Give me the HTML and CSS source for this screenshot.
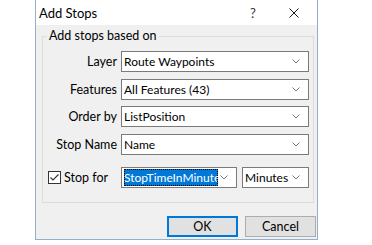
FILE: index.html
```html
<!DOCTYPE html>
<html>
<head>
<meta charset="utf-8">
<link rel="stylesheet" href="styles.css">
</head>
<body>
<div class="dialog">
  <div class="titlebar">
    <span class="title">Add Stops</span>
    <span class="help">?</span>
    <span class="close"><svg width="10" height="10" viewBox="0 0 10 10"><path d="M0.5 0.5 L9.5 9.5 M9.5 0.5 L0.5 9.5" stroke="#1a1a1a" stroke-width="1" fill="none"/></svg></span>
  </div>
  <div class="content">
    <fieldset class="group">
      <legend>Add stops based on</legend>
      <div class="row">
        <span class="label">Layer</span>
        <div class="combo"><span class="value">Route Waypoints</span><svg class="chev" width="8" height="5" viewBox="0 0 8 5"><path d="M0.5 0.5 L4 4 L7.5 0.5" stroke="#7a7a7a" fill="none"/></svg></div>
      </div>
      <div class="row">
        <span class="label">Features</span>
        <div class="combo"><span class="value">All Features (43)</span><svg class="chev" width="8" height="5" viewBox="0 0 8 5"><path d="M0.5 0.5 L4 4 L7.5 0.5" stroke="#7a7a7a" fill="none"/></svg></div>
      </div>
      <div class="row">
        <span class="label">Order by</span>
        <div class="combo"><span class="value">ListPosition</span><svg class="chev" width="8" height="5" viewBox="0 0 8 5"><path d="M0.5 0.5 L4 4 L7.5 0.5" stroke="#7a7a7a" fill="none"/></svg></div>
      </div>
      <div class="row">
        <span class="label">Stop Name</span>
        <div class="combo"><span class="value">Name</span><svg class="chev" width="8" height="5" viewBox="0 0 8 5"><path d="M0.5 0.5 L4 4 L7.5 0.5" stroke="#7a7a7a" fill="none"/></svg></div>
      </div>
      <div class="row row-stop">
        <span class="check"><span class="box"><svg width="11" height="11" viewBox="0 0 11 11"><path d="M1.5 5.5 L4 8 L9.5 2.5" stroke="#333" stroke-width="1.1" fill="none"/></svg></span><span>Stop for</span></span>
        <div class="combo combo-time"><span class="value"><span class="sel">StopTimeInMinutes</span></span><svg class="chev" width="8" height="5" viewBox="0 0 8 5"><path d="M0.5 0.5 L4 4 L7.5 0.5" stroke="#7a7a7a" fill="none"/></svg></div>
        <div class="combo combo-unit"><span class="value">Minutes</span><svg class="chev" width="8" height="5" viewBox="0 0 8 5"><path d="M0.5 0.5 L4 4 L7.5 0.5" stroke="#7a7a7a" fill="none"/></svg></div>
      </div>
    </fieldset>
    <div class="buttons">
      <button class="btn btn-default">OK</button>
      <button class="btn">Cancel</button>
    </div>
  </div>
</div>
</body>
</html>
```
FILE: styles.css
```css
* { box-sizing: border-box; }
html, body { margin: 0; padding: 0; background: #ffffff; }
body {
  font-family: "Lato", "Noto Sans", sans-serif;
  font-size: 12px;
  color: #000;
  width: 372px;
  height: 245px;
  overflow: hidden;
}
.dialog {
  margin-left: 35px;
  width: 283px;
  height: 240px;
  border: 1px solid #8fb0d0;
  border-top: none;
  display: flex;
  flex-direction: column;
}
.titlebar {
  height: 25px;
  background: #fff;
  display: flex;
  align-items: center;
  padding-left: 3px;
  flex: none;
}
.title { flex: 1; font-size: 13px; line-height: 16px; margin-top: 1px; }
.help { width: 14px; text-align: center; margin-right: 29px; font-size: 13px; color: #333; line-height: 16px; }
.close { width: 10px; height: 10px; margin-right: 18px; display: flex; }
.content {
  flex: 1;
  background: #f0f0f0;
  padding: 3px 1px 1px 6px;
  display: flex;
  flex-direction: column;
}
.group {
  margin: 0;
  width: 272px;
  height: 175px;
  border: 1px solid #dcdcdc;
  padding: 7px 4px 0 0;
  min-width: 0;
}
.group legend {
  padding: 0 2px;
  margin-left: 4px;
  line-height: 16px;
  font-size: 12.5px;
}
.row {
  display: flex;
  align-items: center;
  height: 21px;
  margin-bottom: 6.5px;
}
.row-stop { margin-top: 12.5px; }
.label {
  width: 74px;
  text-align: right;
  margin-right: 4px;
  font-size: 12.5px;
}
.combo {
  width: 188px;
  height: 21px;
  background: #fff;
  border: 1px solid #7a7a7a;
  display: flex;
  align-items: center;
  padding: 0 8px 0 2px;
}
.value {
  flex: 1;
  white-space: nowrap;
  overflow: hidden;
  line-height: 17px;
}
.chev { flex: none; }
.check {
  width: 74px;
  margin-right: 4px;
  display: flex;
  align-items: center;
  padding-left: 5px;
  font-size: 12.5px;
}
.box {
  width: 13px;
  height: 13px;
  border: 1px solid #333;
  background: #fff;
  margin-right: 3px;
  display: flex;
  align-items: center;
  justify-content: center;
}
.combo-time { width: 116px; margin-right: 5px; }
.combo-unit { width: 67px; }
.combo-time .value { max-width: 96px; }
.sel {
  display: inline-block;
  background: #0078d7;
  color: #fff;
  outline: 1px dotted #000;
  outline-offset: -1px;
  width: 94px;
  overflow: hidden;
  vertical-align: top;
}
.buttons {
  display: flex;
  justify-content: flex-end;
  gap: 7px;
  margin-top: 13px;
}
.btn {
  width: 71px;
  height: 21px;
  background: #e1e1e1;
  border: 1px solid #adadad;
  font-family: inherit;
  font-size: 12.5px;
  padding: 0;
  color: #000;
}
.btn-default {
  border: 2px solid #0078d7;
}
```
